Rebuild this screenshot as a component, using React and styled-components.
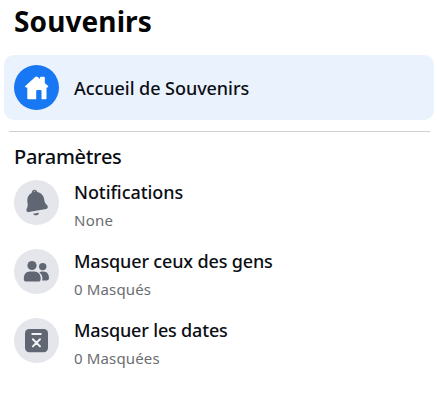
import React from "react";
import styled, { createGlobalStyle } from "styled-components";

const GlobalStyle = createGlobalStyle`
  * { box-sizing: border-box; }
  body {
    margin: 0;
    background: #fff;
    color: #0b0e14;
    font-family: "Segoe UI", "Noto Sans", sans-serif;
  }
`;

const Sidebar = styled.aside`
  width: 437px;
  height: 400px;
  padding: 3px 3px 0 4px;
  overflow: hidden;
  background: #fff;
`;

const Title = styled.h1`
  margin: 0 0 16px 10px;
  font-size: 28px;
  line-height: 36px;
  font-weight: 700;
  letter-spacing: 0.1px;
  color: #050505;
`;

const ActiveLink = styled.nav`
  display: flex;
  align-items: center;
  gap: 15px;
  height: 65px;
  padding: 0 10px;
  border-radius: 10px;
  background: #eaf2fe;
`;

const Divider = styled.hr`
  height: 1px;
  margin: 11px 4px 12px 5px;
  border: 0;
  background: #ced0d3;
`;

const SectionTitle = styled.h2`
  margin: 0 0 10px 10px;
  font-size: 20px;
  line-height: 26px;
  font-weight: 500;
  letter-spacing: -0.3px;
`;

const SettingsList = styled.div`
  display: flex;
  flex-direction: column;
  gap: 19px;
  padding-left: 10px;
`;

const SettingRow = styled.div`
  display: flex;
  align-items: flex-start;
  gap: 15px;
  height: 50px;
`;

const IconCircle = styled.span`
  display: flex;
  flex: none;
  width: 45px;
  height: 45px;
  border-radius: 50%;
  background: ${(p) => (p.$active ? "#1877f2" : "#e4e6eb")};
  color: ${(p) => (p.$active ? "#fff" : "#606773")};

  svg { width: 45px; height: 45px; }
`;

const TextColumn = styled.div`
  display: flex;
  flex-direction: column;
  gap: 6px;
`;

const Label = styled.span`
  font-size: 18px;
  line-height: 24px;
  font-weight: 500;
  white-space: nowrap;
  letter-spacing: ${(p) => p.$spacing}px;
`;

const Detail = styled.span`
  font-size: 15px;
  line-height: 20px;
  color: #6b6d71;
  white-space: nowrap;
  letter-spacing: ${(p) => p.$spacing}px;
`;

const HomeIcon = () => (
  <svg viewBox="0 0 45 45" fill="currentColor" aria-hidden="true">
    <path d="M21.2 12.1a2 2 0 0 1 2.6 0l2.2 1.9v-1.3q0-.9.9-.9h3q.9 0 .9.9v5.4l3 2.6c.9.8.4 1.7-.6 1.7h-.7v11q0 .8-.8.8h-4.2v-8.1q0-1-1-1h-3.3q-1 0-1 1v8.1h-8.1q-.8 0-.8-.8v-11h-1.1c-1 0-1.5-.9-.6-1.7Z" />
  </svg>
);

const BellIcon = () => (
  <svg viewBox="0 0 45 45" fill="currentColor" aria-hidden="true">
    <path fillRule="evenodd" d="M17.8 12.7c.1-1.8 1.2-2.9 2.7-2.9 1.4 0 2.2.8 2.8 2.1 3.2.4 5.8 2.7 6.5 5.9l.8 3.8c.2.9.6 1.5 1.2 2.2l1.5 1.8c1.1 1.4.5 3.1-1.2 3.4l-17.3 3.1c-1.8.3-2.9-1.1-2.3-2.8l.9-2.3c.3-.8.4-1.5.3-2.4l-.4-3.6c-.3-3.5 1.4-6.8 4.5-8.3Zm2-.8 1.5-.2c-.2-.5-.5-.6-.9-.5-.4 0-.6.3-.6.7Z" />
    <path d="m19.2 33.7 5.6-1c.1 1.3-.8 2.3-2.3 2.5-1.6.3-2.9-.3-3.3-1.5Z" />
  </svg>
);

const PeopleIcon = () => (
  <svg viewBox="0 0 45 45" fill="currentColor" aria-hidden="true">
    <circle cx="18" cy="16.5" r="4.6" />
    <circle cx="28.7" cy="17.6" r="3.7" />
    <path d="M15.8 22.6h4.4c4.1 0 6.5 3.1 6.5 7.1 0 1.9-.9 2.9-2.6 2.9H12.4c-1.7 0-2.6-1-2.6-2.9 0-4 2-7.1 6-7.1Z" />
    <path d="M25.3 23.2c.8-.4 1.8-.6 2.9-.6h1.2c3.5 0 5.6 2.8 5.6 6.2 0 1.8-.8 2.7-2.4 2.7h-4.4c.8-3.3-.3-6.4-2.9-8.3Z" />
  </svg>
);

const DateIcon = () => (
  <svg viewBox="0 0 45 45" aria-hidden="true">
    <rect x="11" y="11" width="23" height="23.2" rx="4.2" fill="currentColor" />
    <path d="M18.3 16h8.5M18.9 21.2l7.1 7.2M26 21.2l-7.1 7.2" fill="none" stroke="#f0f2f5" strokeWidth="2" strokeLinecap="round" />
  </svg>
);

const settings = [
  { label: "Notifications", detail: "None", Icon: BellIcon, spacing: -0.06, detailSpacing: 0.25 },
  { label: "Masquer ceux des gens", detail: "0 Masqués", Icon: PeopleIcon, spacing: -0.16, detailSpacing: 0.15 },
  { label: "Masquer les dates", detail: "0 Masquées", Icon: DateIcon, spacing: -0.18, detailSpacing: 0.15 },
];

export default function App() {
  return (
    <>
      <GlobalStyle />
      <Sidebar>
        <Title>Souvenirs</Title>
        <ActiveLink>
          <IconCircle $active><HomeIcon /></IconCircle>
          <Label $spacing={-0.05}>Accueil de Souvenirs</Label>
        </ActiveLink>
        <Divider />
        <SectionTitle>Paramètres</SectionTitle>
        <SettingsList>
          {settings.map(({ label, detail, Icon, spacing, detailSpacing }) => (
            <SettingRow key={label}>
              <IconCircle><Icon /></IconCircle>
              <TextColumn>
                <Label $spacing={spacing}>{label}</Label>
                <Detail $spacing={detailSpacing}>{detail}</Detail>
              </TextColumn>
            </SettingRow>
          ))}
        </SettingsList>
      </Sidebar>
    </>
  );
}
